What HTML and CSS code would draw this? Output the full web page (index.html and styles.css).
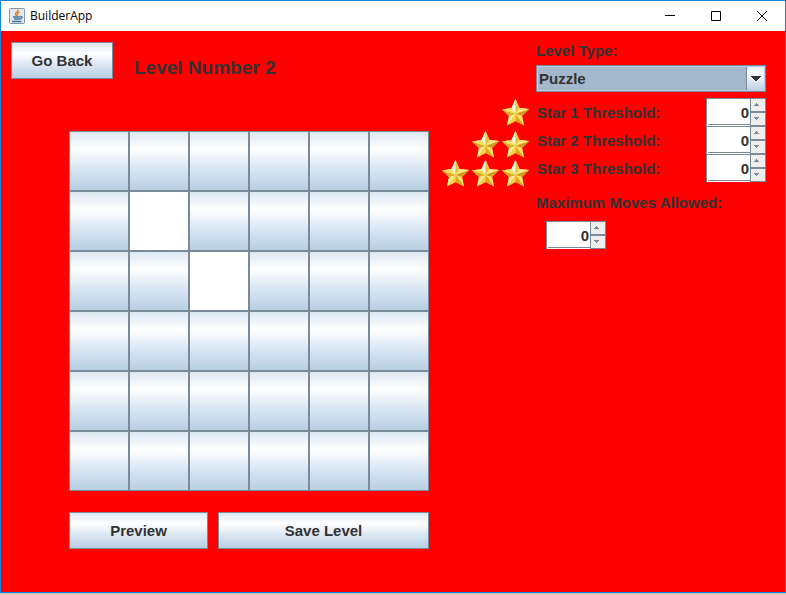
FILE: index.html
```html
<!DOCTYPE html>
<html lang="en">
<head>
<meta charset="utf-8">
<title>BuilderApp</title>
<link rel="stylesheet" href="styles.css">
</head>
<body>
<svg class="defs" aria-hidden="true">
  <linearGradient id="gold" x1="0" y1="0" x2="0" y2="1">
    <stop offset="0" stop-color="#fff6cf"/><stop offset=".5" stop-color="#f7d84e"/><stop offset="1" stop-color="#f0c02a"/>
  </linearGradient>
  <symbol id="star" viewBox="0 0 27 27">
    <path fill="url(#gold)" d="M13.500 0 17.500 9 27 10 20 17 22 26.500 13.500 22 5 26.500 7 17 0 10.500 9.500 9Z"/>
    <path fill="#fffbe6" d="M13.500 0 13.500 15 9.500 9Z"/>
    <path fill="#eebf35" d="M13.500 0 17.500 9 13.500 15Z"/>
    <path fill="#fbe787" d="M17.500 9 27 10 13.500 15Z"/>
    <path fill="#d19a1c" d="M27 10 20 17 13.500 15Z"/>
    <path fill="#fbdf68" d="M20 17 22 26.500 13.500 15Z"/>
    <path fill="#dda522" d="M22 26.500 13.500 22 13.500 15Z"/>
    <path fill="#f6d044" d="M13.500 22 5 26.500 13.500 15Z"/>
    <path fill="#fdee9c" d="M5 26.500 7 17 13.500 15Z"/>
    <path fill="#dfa921" d="M7 17 0 10.500 13.500 15Z"/>
    <path fill="#fae06a" d="M0 10.500 9.500 9 13.500 15Z"/>
  </symbol>
  <symbol id="up" viewBox="0 0 5 3"><path fill="#7a8a99" d="M2 0h1v1h1v1h1v1H0V2h1V1h1z"/></symbol>
  <symbol id="down" viewBox="0 0 5 3"><path fill="#7a8a99" d="M0 0h5v1H4v1H3v1H2V2H1V1H0z"/></symbol>
</svg>
<div class="window">
  <header class="titlebar">
    <svg class="app-icon" viewBox="0 0 16 16" aria-hidden="true">
      <rect x=".5" y=".5" width="15" height="15" rx="1" fill="#e3e9ee" stroke="#7f95a8"/>
      <path d="M9 1.500C9.500 4 5.500 4.500 6.500 6.500L8 8M10.500 4C8 5 8 6 9 7.500" fill="none" stroke="#e67a22" stroke-width="1.400"/>
      <path d="M4 9h7M5 11h5.500M3 13.500h9.500M11 8.500c3.500-.5 2 2.500-.5 2.500" fill="none" stroke="#4577a3" stroke-width="1.300"/>
    </svg>
    <span class="app-name">BuilderApp</span>
    <button class="caption" aria-label="Minimize"><svg viewBox="0 0 12 12"><path d="M1 5.500h10"/></svg></button>
    <button class="caption" aria-label="Maximize"><svg viewBox="0 0 12 12"><path d="M1.500 1.500h9v9h-9z"/></svg></button>
    <button class="caption" aria-label="Close"><svg viewBox="0 0 12 12"><path d="M1 1l10 10M11 1L1 11"/></svg></button>
  </header>
  <main class="content">
    <section class="editor">
      <div class="heading">
        <button class="metal back">Go Back</button>
        <h1>Level Number 2</h1>
      </div>
      <div class="workspace">
        <div class="board">
          <button class="metal" aria-label="Tile 1"></button><button class="metal" aria-label="Tile 2"></button><button class="metal" aria-label="Tile 3"></button><button class="metal" aria-label="Tile 4"></button><button class="metal" aria-label="Tile 5"></button><button class="metal" aria-label="Tile 6"></button>
          <button class="metal" aria-label="Tile 7"></button><button class="metal empty" aria-label="Tile 8"></button><button class="metal" aria-label="Tile 9"></button><button class="metal" aria-label="Tile 10"></button><button class="metal" aria-label="Tile 11"></button><button class="metal" aria-label="Tile 12"></button>
          <button class="metal" aria-label="Tile 13"></button><button class="metal" aria-label="Tile 14"></button><button class="metal empty" aria-label="Tile 15"></button><button class="metal" aria-label="Tile 16"></button><button class="metal" aria-label="Tile 17"></button><button class="metal" aria-label="Tile 18"></button>
          <button class="metal" aria-label="Tile 19"></button><button class="metal" aria-label="Tile 20"></button><button class="metal" aria-label="Tile 21"></button><button class="metal" aria-label="Tile 22"></button><button class="metal" aria-label="Tile 23"></button><button class="metal" aria-label="Tile 24"></button>
          <button class="metal" aria-label="Tile 25"></button><button class="metal" aria-label="Tile 26"></button><button class="metal" aria-label="Tile 27"></button><button class="metal" aria-label="Tile 28"></button><button class="metal" aria-label="Tile 29"></button><button class="metal" aria-label="Tile 30"></button>
          <button class="metal" aria-label="Tile 31"></button><button class="metal" aria-label="Tile 32"></button><button class="metal" aria-label="Tile 33"></button><button class="metal" aria-label="Tile 34"></button><button class="metal" aria-label="Tile 35"></button><button class="metal" aria-label="Tile 36"></button>
        </div>
        <div class="actions">
          <button class="metal">Preview</button>
          <button class="metal">Save Level</button>
        </div>
      </div>
    </section>
    <aside class="settings">
      <div class="type">
        <label for="type">Level Type:</label>
        <div class="combo">
          <select id="type"><option>Puzzle</option></select>
          <svg class="combo-arrow" viewBox="0 0 10 5" aria-hidden="true"><path fill="#333" d="M0 0h10v1H9v1H8v1H7v1H6v1H4V4H3V3H2V2H1V1H0z"/></svg>
        </div>
      </div>
      <div class="stars" aria-hidden="true">
        <div class="star-row"><svg><use href="#star"/></svg></div>
        <div class="star-row"><svg><use href="#star"/></svg><svg><use href="#star"/></svg></div>
        <div class="star-row"><svg><use href="#star"/></svg><svg><use href="#star"/></svg><svg><use href="#star"/></svg></div>
      </div>
      <div class="thresholds">
        <div class="threshold">
          <label for="s1">Star 1 Threshold:</label>
          <div class="spinner"><input id="s1" type="number" value="0"><button aria-label="Increase"><svg><use href="#up"/></svg></button><button aria-label="Decrease"><svg><use href="#down"/></svg></button></div>
        </div>
        <div class="threshold">
          <label for="s2">Star 2 Threshold:</label>
          <div class="spinner"><input id="s2" type="number" value="0"><button aria-label="Increase"><svg><use href="#up"/></svg></button><button aria-label="Decrease"><svg><use href="#down"/></svg></button></div>
        </div>
        <div class="threshold">
          <label for="s3">Star 3 Threshold:</label>
          <div class="spinner"><input id="s3" type="number" value="0"><button aria-label="Increase"><svg><use href="#up"/></svg></button><button aria-label="Decrease"><svg><use href="#down"/></svg></button></div>
        </div>
      </div>
      <div class="moves">
        <label for="moves">Maximum Moves Allowed:</label>
        <div class="spinner"><input id="moves" type="number" value="0"><button aria-label="Increase"><svg><use href="#up"/></svg></button><button aria-label="Decrease"><svg><use href="#down"/></svg></button></div>
      </div>
    </aside>
  </main>
</div>
</body>
</html>
```
FILE: styles.css
```css
* { box-sizing: border-box; }

body {
  margin: 0;
  min-height: 100vh;
  padding-bottom: 2px;
  display: flex;
  background: #c8c8c8;
  color: #333;
  font: bold 15px/20px "Liberation Sans", Arial, sans-serif;
}

button, input, select { margin: 0; padding: 0; border-radius: 0; color: inherit; font: inherit; }

.defs { position: absolute; width: 0; height: 0; }

.window {
  flex: 1;
  display: flex;
  flex-direction: column;
  border: 1px solid #1883d7;
  background: #f00;
}

.titlebar {
  display: flex;
  align-items: center;
  height: 30px;
  padding-left: 8px;
  background: #fff;
  color: #000;
  font: 12px/16px "Open Sans", sans-serif;
}
.app-icon { width: 16px; height: 16px; margin-right: 5px; }
.app-name { flex: 1; }
.caption { width: 46px; height: 30px; border: 0; background: none; display: grid; place-items: center; }
.caption svg { width: 12px; height: 12px; fill: none; stroke: #000; }

.content {
  flex: 1;
  display: grid;
  grid-template-columns: 1fr 324px;
  padding: 11px 19px 11px 10px;
}

.metal {
  border: 1px solid #7a8a99;
  background: linear-gradient(#dde8f3, #fff 30%, #dde8f3 60%, #b8cfe5);
}
.empty { background: #fff; }

.heading { display: flex; gap: 21px; }
.back { width: 102px; height: 37px; }
h1 { margin: 14px 0 0; font-size: 19px; line-height: 24px; }

.workspace { width: 360px; margin: 51px 0 0 58px; }
.board {
  display: grid;
  grid-template-columns: repeat(6, 1fr);
  aspect-ratio: 1;
}
.actions { display: grid; grid-template-columns: 139fr 211fr; gap: 10px; margin-top: 21px; }
.actions .metal { height: 37px; }

.settings {
  display: grid;
  grid-template-columns: 87px 230px;
  grid-template-rows: 51px 84px auto;
  column-gap: 7px;
  row-gap: 6px;
  justify-content: end;
  margin-top: -1px;
}
.type, .moves { grid-column: 2; }
.type label, .moves label { display: block; }
.combo { position: relative; margin-top: 4px; }
.combo select {
  display: block;
  width: 100%;
  height: 27px;
  padding: 0 20px 0 2px;
  border: 1px solid #7a8a99;
  appearance: none;
  background:
    linear-gradient(#7a8a99, #7a8a99) right 18px top / 1px 100% no-repeat,
    linear-gradient(#dde8f3, #fff 30%, #dde8f3 60%, #b8cfe5) right / 18px 100% no-repeat,
    #a3b8cc;
  box-shadow: inset 0 0 0 1px #b8cfe5;
}
.combo-arrow { position: absolute; right: 5px; top: 11px; width: 10px; height: 5px; }

.stars { display: grid; grid-template-rows: 32px 29px 27px; padding-top: 1px; }
.star-row { display: flex; justify-content: flex-end; gap: 3px; }
.star-row svg { width: 27px; height: 27px; }

.threshold { display: flex; justify-content: space-between; height: 28px; padding-left: 1px; }
.threshold label { padding-top: 5px; }

.spinner {
  display: grid;
  grid-template: 14px 14px / 44px 16px;
  width: 60px;
}
.spinner input {
  grid-row: 1 / 3;
  width: 44px;
  padding-right: 1px;
  border: solid #7a8a99;
  border-width: 1px 0 0 1px;
  background: linear-gradient(#7a8a99, #7a8a99) left 1px bottom 1px / 100% 1px no-repeat #fff;
  text-align: right;
  appearance: textfield;
}
.spinner input::-webkit-inner-spin-button { display: none; }
.spinner button { display: grid; place-items: center; padding: 0 3px 1px 0; border: 1px solid #7a8a99; background: #eee; }
.spinner svg { width: 5px; height: 3px; }

.moves { padding-top: 5px; }
.moves .spinner { margin: 8px 0 0 10px; }
```
